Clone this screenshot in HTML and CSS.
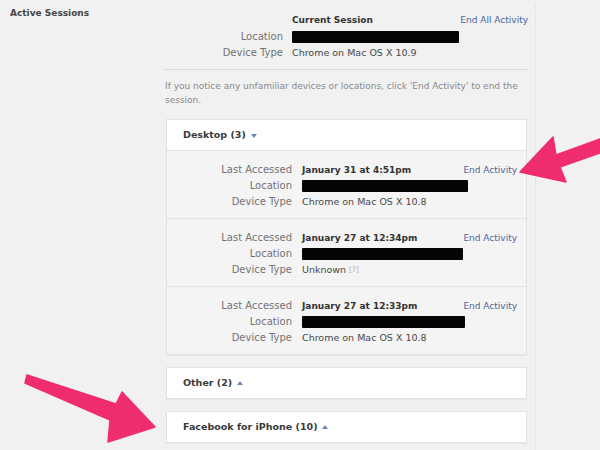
FILE: index.html
```html
<!DOCTYPE html>
<html lang="en">
<head>
    <meta charset="UTF-8">
    <meta name="viewport" content="width=device-width, initial-scale=1.0">
    <title>Active Sessions</title>
    <link rel="stylesheet" href="styles.css">
</head>
<body>

    <div class="pagina">
        <div class="secao">
            <div class="secao-titulo">Active Sessions</div>

            <div class="secao-corpo">
                <div class="atual">
                    <span></span>
                    <span class="valor forte">Current Session</span>
                    <a class="link">End All Activity</a>

                    <span class="rotulo">Location</span>
                    <span class="valor"><span class="tarja tarja-atual"></span></span>
                    <span></span>

                    <span class="rotulo">Device Type</span>
                    <span class="valor">Chrome on Mac OS X 10.9</span>
                    <span></span>
                </div>

                <div class="divisor"></div>

                <p class="aviso">If you notice any unfamiliar devices or locations, click 'End Activity' to end the session.</p>

                <div class="grupo">
                    <div class="grupo-topo">Desktop (3) <span class="seta-baixo"></span></div>

                    <div class="sessao">
                        <span class="rotulo">Last Accessed</span>
                        <span class="valor forte">January 31 at 4:51pm</span>
                        <a class="link">End Activity</a>

                        <span class="rotulo">Location</span>
                        <span class="valor"><span class="tarja tarja-1"></span></span>
                        <span></span>

                        <span class="rotulo">Device Type</span>
                        <span class="valor">Chrome on Mac OS X 10.8</span>
                        <span></span>
                    </div>

                    <div class="sessao">
                        <span class="rotulo">Last Accessed</span>
                        <span class="valor forte">January 27 at 12:34pm</span>
                        <a class="link">End Activity</a>

                        <span class="rotulo">Location</span>
                        <span class="valor"><span class="tarja tarja-2"></span></span>
                        <span></span>

                        <span class="rotulo">Device Type</span>
                        <span class="valor">Unknown <span class="ajuda">[?]</span></span>
                        <span></span>
                    </div>

                    <div class="sessao">
                        <span class="rotulo">Last Accessed</span>
                        <span class="valor forte">January 27 at 12:33pm</span>
                        <a class="link">End Activity</a>

                        <span class="rotulo">Location</span>
                        <span class="valor"><span class="tarja tarja-3"></span></span>
                        <span></span>

                        <span class="rotulo">Device Type</span>
                        <span class="valor">Chrome on Mac OS X 10.8</span>
                        <span></span>
                    </div>
                </div>

                <div class="grupo">
                    <div class="grupo-topo">Other (2) <span class="seta-cima"></span></div>
                </div>

                <div class="grupo">
                    <div class="grupo-topo">Facebook for iPhone (10) <span class="seta-cima"></span></div>
                </div>
            </div>
        </div>

        <!-- setas rosas por cima da tela -->
        <svg class="setas" width="600" height="450" viewBox="0 0 600 450">
            <polygon points="520,172 553,137 556,155 600,139 600,153 560,167 566,182" />
            <polygon points="27,375 116,404 122,392 155,427 108,442 110,420 25,383" />
        </svg>
    </div>

</body>
</html>
```

FILE: styles.css
```css
* {
    margin: 0;
    padding: 0;
    box-sizing: border-box;
}

body {
    background: #f1f1f1;
    font-family: 'DejaVu Sans', 'Liberation Sans', sans-serif;
    font-size: 9.5px;
    color: #333;
    width: 600px;
    height: 450px;
    overflow: hidden;
}

.pagina {
    position: relative;
    height: 450px;
}

.secao {
    display: flex;
    padding-top: 5px;
}

.secao-titulo {
    width: 163px;
    padding-left: 10px;
    line-height: 16px;
    font-size: 9px;
    font-weight: bold;
    color: #444;
}

.secao-corpo {
    width: 373px;
    padding-top: 7px;
    padding-right: 7px;
    border-right: 1px solid #e6e6e6;
    min-height: 450px;
}

/* Sessão atual */
.atual {
    display: grid;
    grid-template-columns: 120px minmax(0, 1fr) max-content;
    column-gap: 9px;
    line-height: 16.5px;
}

.rotulo {
    text-align: right;
    color: #737373;
    font-size: 10px;
    white-space: nowrap;
}

.valor {
    color: #484848;
    display: flex;
    align-items: center;
    gap: 3px;
    white-space: nowrap;
}

.forte {
    font-weight: bold;
    font-size: 9px;
    color: #333;
}

.link {
    color: #4b64a0;
    text-align: right;
    font-size: 9px;
    white-space: nowrap;
}

.tarja {
    display: inline-block;
    flex-shrink: 0;
    height: 12px;
    background: #050505;
    border-radius: 1px;
}

.tarja-atual { width: 167px; }
.tarja-1 { width: 166px; }
.tarja-2 { width: 161px; }
.tarja-3 { width: 163px; }

.ajuda {
    color: #aaa;
    font-size: 7.5px;
}

.divisor {
    height: 1px;
    background: #d9d9d9;
    margin-top: 7px;
}

.aviso {
    margin-top: 9px;
    padding-left: 2px;
    line-height: 14px;
    font-size: 9px;
    color: #8a8a8a;
}

/* Grupos de dispositivos */
.grupo {
    margin: 12px 1px 0 3px;
    border: 1px solid #e2e2e2;
    box-shadow: 0 1px 1px rgba(0, 0, 0, 0.04);
}

.grupo-topo {
    background: #fff;
    height: 30px;
    padding-left: 16px;
    display: flex;
    align-items: center;
    gap: 5px;
    font-size: 9.5px;
    font-weight: bold;
    color: #3a3a3a;
}

.seta-baixo {
    width: 0;
    height: 0;
    border-left: 3px solid transparent;
    border-right: 3px solid transparent;
    border-top: 4px solid #6d84b4;
    margin-top: 2px;
}

.seta-cima {
    width: 0;
    height: 0;
    border-left: 3px solid transparent;
    border-right: 3px solid transparent;
    border-bottom: 4px solid #6d84b4;
}

.sessao {
    display: grid;
    grid-template-columns: 125px minmax(0, 1fr) max-content;
    column-gap: 10px;
    padding: 11px 9px 8px 0;
    line-height: 16px;
    background: #f4f4f4;
    border-top: 1px solid #e2e2e2;
}

.setas {
    position: absolute;
    top: 0;
    left: 0;
    pointer-events: none;
}

.setas polygon {
    fill: #f02d6c;
    stroke: #f02d6c;
    stroke-width: 1.5;
    stroke-linejoin: round;
}
```
